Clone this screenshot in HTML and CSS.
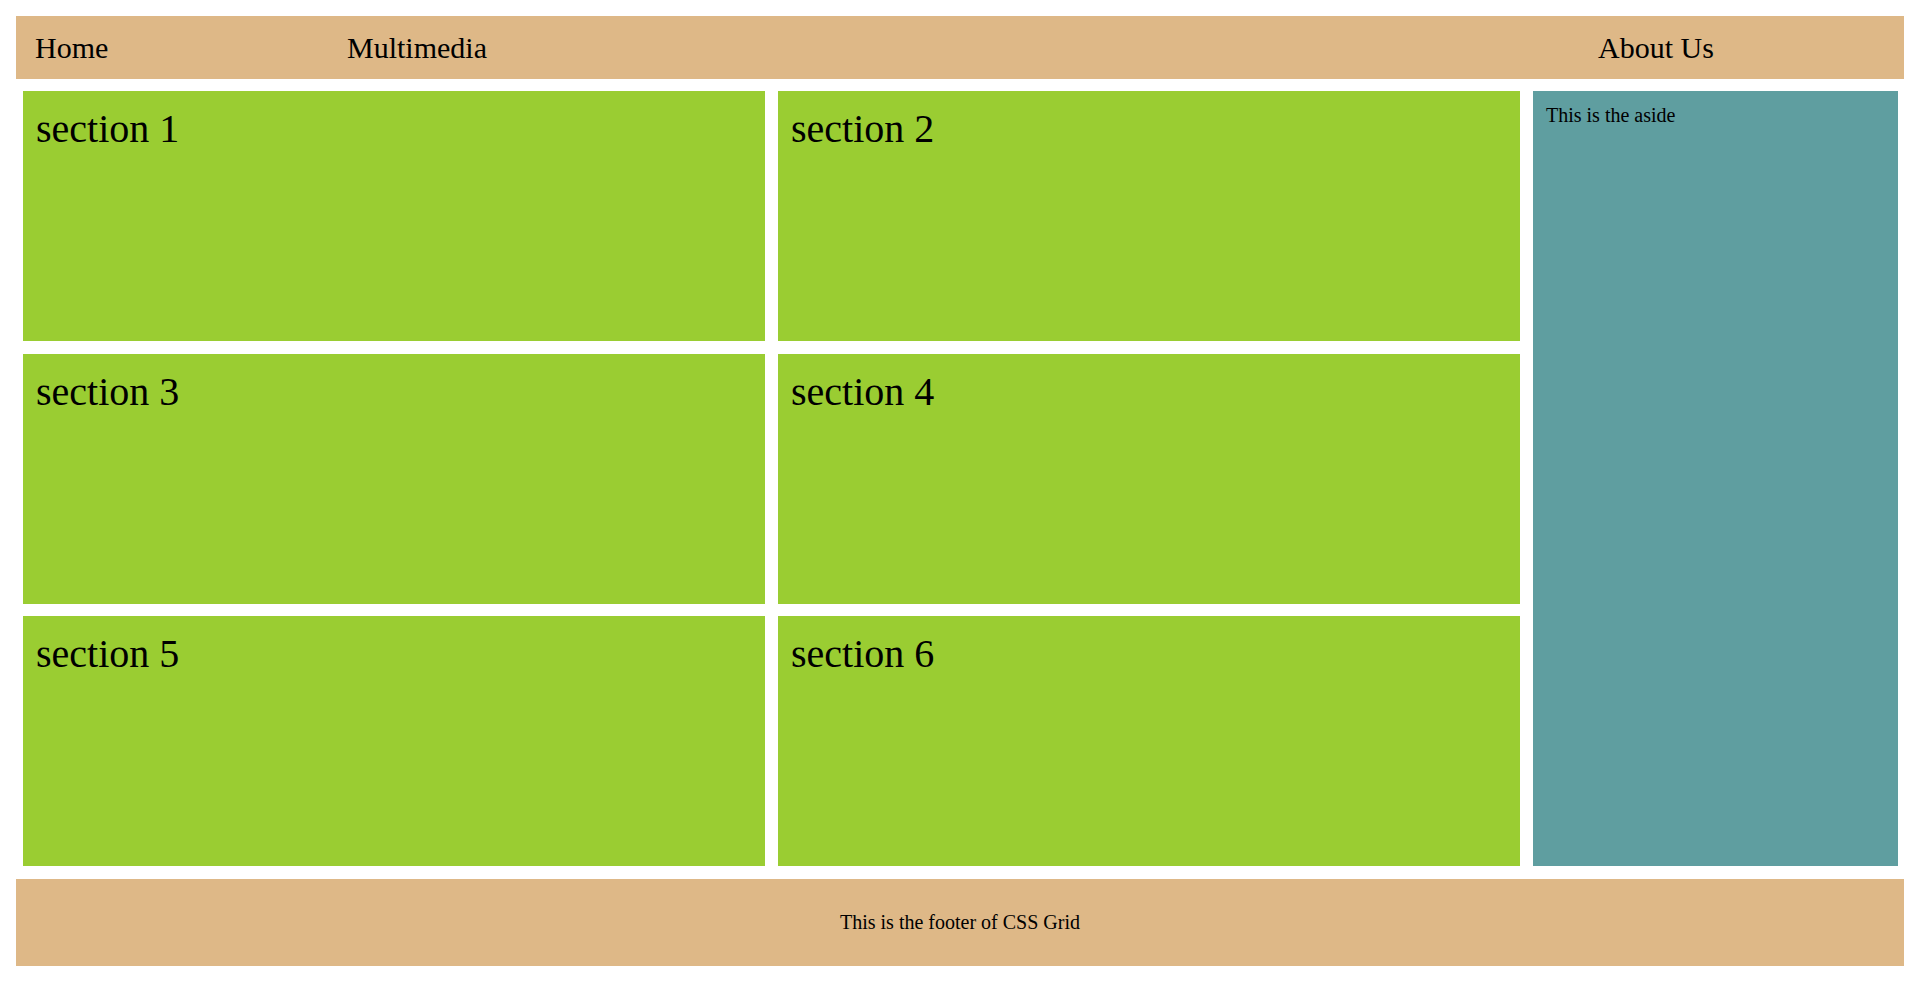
FILE: index.html
```html
<!DOCTYPE html>
<html lang="en">
<head>
<meta charset="utf-8">
<title>CSS Grid</title>
<link rel="stylesheet" href="styles.css">
</head>
<body>
<div class="page">
  <header class="site-header">
    <span class="nav-item">Home</span>
    <span class="nav-item">Multimedia</span>
    <span class="nav-item">About Us</span>
  </header>
  <div class="content">
    <section class="box">section 1</section>
    <section class="box">section 2</section>
    <aside class="aside">This is the aside</aside>
    <section class="box">section 3</section>
    <section class="box">section 4</section>
    <section class="box">section 5</section>
    <section class="box">section 6</section>
  </div>
  <footer class="site-footer">This is the footer of CSS Grid</footer>
</div>
</body>
</html>
```
FILE: styles.css
```css
html, body {
  margin: 0;
  padding: 0;
  background: #ffffff;
}

body {
  font-family: "Liberation Serif", "Times New Roman", serif;
  color: #000000;
}

.page {
  padding: 16px 16px 0 16px;
  display: flex;
  flex-direction: column;
}

.site-header {
  height: 63px;
  background: #deb887;
  display: grid;
  grid-template-columns: 312px 1fr 306px;
  align-items: center;
  padding-left: 19px;
  font-size: 30px;
}

.nav-item {
  line-height: 34px;
}

.content {
  margin: 12px 6px 13px 7px;
  display: grid;
  grid-template-columns: 1fr 1fr 365px;
  grid-template-rows: 250px 250px 250px;
  gap: 12.5px 13px;
}

.box {
  background: #9acd32;
  padding: 15px 13px 13px 13px;
  font-size: 40px;
  line-height: 46px;
}

.aside {
  grid-column: 3;
  grid-row: 1 / 4;
  background: #5f9ea0;
  padding: 13px 13px;
  font-size: 20px;
  line-height: 23px;
}

.site-footer {
  height: 87px;
  background: #deb887;
  display: flex;
  align-items: center;
  justify-content: center;
  font-size: 20px;
}
```
